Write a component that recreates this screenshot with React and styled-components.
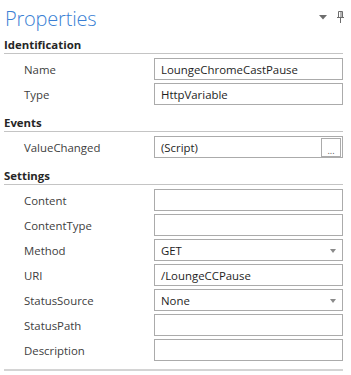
import React from 'react';
import styled, { createGlobalStyle } from 'styled-components';

const Global = createGlobalStyle`
  html, body {
    margin: 0;
    padding: 0;
    background: #ffffff;
  }
  body {
    font-family: 'Open Sans', 'Noto Sans', sans-serif;
  }
`;

const Panel = styled.div`
  width: 351px;
  height: 375px;
  box-sizing: border-box;
  padding: 0 8px 0 4px;
  background: #fff;
  overflow: hidden;
`;

const TitleBar = styled.div`
  height: 37px;
  display: flex;
  align-items: flex-start;
  justify-content: space-between;
`;

const Title = styled.h1`
  margin: 0;
  padding: 6px 0 0 1px;
  font-family: 'Open Sans', 'Noto Sans', sans-serif;
  font-weight: 300;
  font-size: 20px;
  letter-spacing: -0.2px;
  line-height: 26px;
  color: #3a7fd4;
`;

const TitleTools = styled.div`
  display: flex;
  align-items: center;
  gap: 10px;
  padding-top: 11px;
  margin-right: -1px;
`;

const SectionHeader = styled.div`
  margin-top: ${p => (p.$first ? '0' : '10px')};
  height: 16px;
  line-height: 16px;
  font-size: 11.4px;
  font-weight: 700;
  color: #262626;
  border-bottom: 1px solid #c4c4c4;
`;

const Rows = styled.div`
  display: flex;
  flex-direction: column;
  gap: 3px;
  padding-top: 4px;
`;

const Row = styled.div`
  display: grid;
  grid-template-columns: 150px 1fr;
  height: 22px;
  align-items: center;
`;

const Label = styled.div`
  padding-left: 20px;
  font-size: 11.4px;
  color: #404040;
  white-space: nowrap;
`;

const Field = styled.div`
  position: relative;
  height: 22px;
  box-sizing: border-box;
  border: 1px solid #ababab;
  display: flex;
  align-items: center;
  padding: 0 ${p => (p.$select ? '18px' : '4px')} 0 6px;
  font-size: 11.4px;
  color: #1e1e1e;
  white-space: nowrap;
`;

const FieldText = styled.span`
  flex: 1;
`;

const EllipsisButton = styled.div`
  position: absolute;
  right: 1px;
  top: 1px;
  width: 18px;
  height: 17px;
  border: 1px solid #ababab;
  display: flex;
  align-items: flex-end;
  justify-content: center;
  font-size: 9px;
  line-height: 11px;
  color: #555;
`;

const Arrow = styled.span`
  position: absolute;
  right: 6px;
  top: 9px;
  width: 0;
  height: 0;
  border-left: 3px solid transparent;
  border-right: 3px solid transparent;
  border-top: 4px solid #8a8a8a;
`;

const BottomRule = styled.div`
  margin-top: 8px;
  height: 2px;
  background: #d4d4d4;
`;

function DropIcon() {
  return (
    <svg width="8" height="5" viewBox="0 0 8 5">
      <path d="M0 0 H8 L4 4.5 Z" fill="#6d6d6d" />
    </svg>
  );
}

function PinIcon() {
  return (
    <svg width="7" height="12" viewBox="0 0 7 12">
      <path d="M1.5 0.5 H5.5 V6.5 H1.5 Z M0 6.5 H7 M3.5 6.5 V12 M4 0.5 V6.5" fill="none" stroke="#6d6d6d" strokeWidth="1" />
    </svg>
  );
}

const sections = [
  {
    title: 'Identification',
    rows: [
      { label: 'Name', value: 'LoungeChromeCastPause' },
      { label: 'Type', value: 'HttpVariable' },
    ],
  },
  {
    title: 'Events',
    rows: [{ label: 'ValueChanged', value: '(Script)', button: true }],
  },
  {
    title: 'Settings',
    rows: [
      { label: 'Content', value: '' },
      { label: 'ContentType', value: '' },
      { label: 'Method', value: 'GET', select: true },
      { label: 'URI', value: '/LoungeCCPause' },
      { label: 'StatusSource', value: 'None', select: true },
      { label: 'StatusPath', value: '' },
      { label: 'Description', value: '' },
    ],
  },
];

export default function App() {
  return (
    <Panel>
      <Global />
      <TitleBar>
        <Title>Properties</Title>
        <TitleTools>
          <DropIcon />
          <PinIcon />
        </TitleTools>
      </TitleBar>
      {sections.map((s, i) => (
        <section key={s.title}>
          <SectionHeader $first={i === 0}>{s.title}</SectionHeader>
          <Rows>
            {s.rows.map(r => (
              <Row key={r.label}>
                <Label>{r.label}</Label>
                <Field $select={r.select}>
                  <FieldText>{r.value}</FieldText>
                  {r.button && <EllipsisButton>...</EllipsisButton>}
                  {r.select && <Arrow />}
                </Field>
              </Row>
            ))}
          </Rows>
        </section>
      ))}
      <BottomRule />
    </Panel>
  );
}
